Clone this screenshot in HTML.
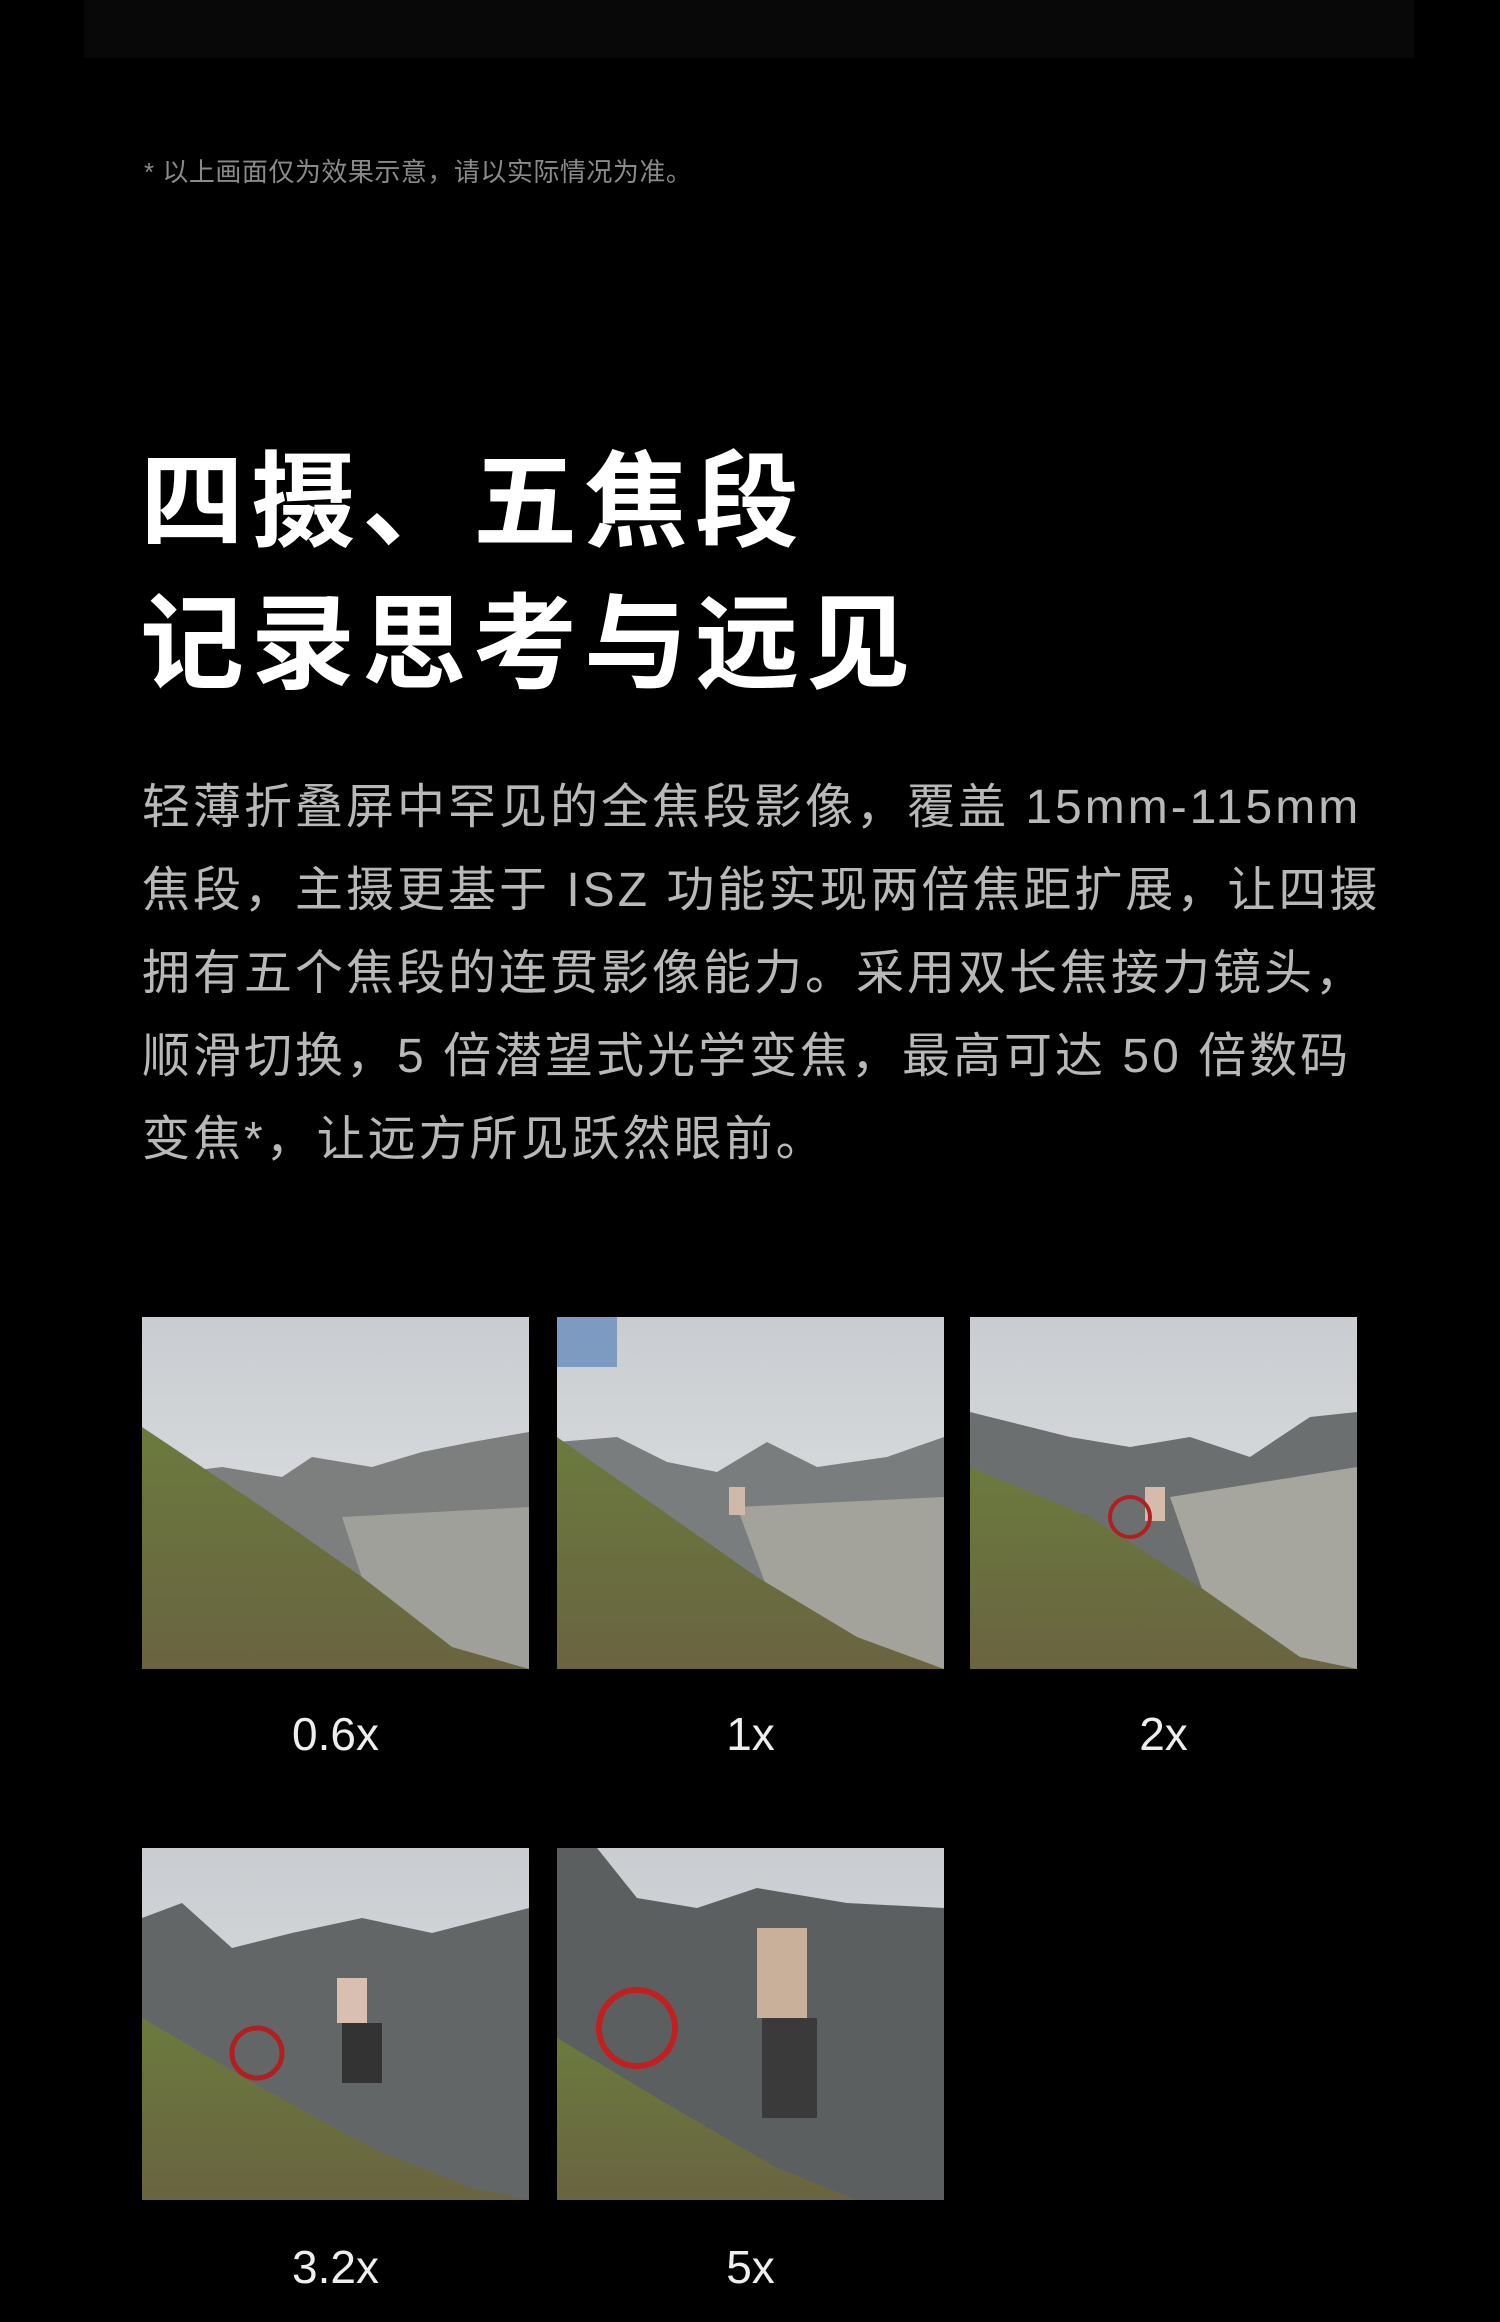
<!DOCTYPE html>
<html><head><meta charset="utf-8"><style>
html,body{margin:0;padding:0;background:#000;}
body{width:1500px;height:2322px;position:relative;overflow:hidden;font-family:"Liberation Sans","Noto Sans CJK SC",sans-serif;}
.topbar{position:absolute;left:84px;top:0;width:1330px;height:58px;background:#080808;}
.note{position:absolute;left:144px;top:152px;font-size:26px;color:#8a8a8a;white-space:nowrap;letter-spacing:0.5px;}
h1{position:absolute;left:140px;top:432px;margin:0;font-size:104px;line-height:142px;font-weight:bold;color:#fff;letter-spacing:7px;}
.p{position:absolute;left:142px;top:766px;width:1300px;font-size:48px;line-height:83px;color:#b8b8b8;letter-spacing:3px;white-space:nowrap;}
.img{position:absolute;width:387px;height:352px;overflow:hidden;}
.lbl{position:absolute;width:387px;text-align:center;font-size:46px;color:#eee;}
</style></head><body>
<div class="topbar"></div>
<div class="note">* 以上画面仅为效果示意，请以实际情况为准。</div>
<h1>四摄、五焦段<br>记录思考与远见</h1>
<div class="p">轻薄折叠屏中罕见的全焦段影像，覆盖 15mm-115mm<br>焦段，主摄更基于 ISZ 功能实现两倍焦距扩展，让四摄<br>拥有五个焦段的连贯影像能力。采用双长焦接力镜头，<br>顺滑切换，5 倍潜望式光学变焦，最高可达 50 倍数码<br>变焦*，让远方所见跃然眼前。</div>

<svg class="img" style="left:142px;top:1317px" viewBox="0 0 387 352"><defs><linearGradient id="s" x1="0" y1="0" x2="0" y2="1"><stop offset="0" stop-color="#c9ccd0"/><stop offset="1" stop-color="#e4e6e8"/></linearGradient><linearGradient id="g" x1="0" y1="0" x2="0" y2="1"><stop offset="0" stop-color="#6b7a3e"/><stop offset="1" stop-color="#6a6440"/></linearGradient></defs>
<rect width="387" height="352" fill="url(#s)"/><path d="M0 160 L80 150 L140 160 L170 140 L230 150 L280 135 L330 125 L387 115 L387 352 L0 352Z" fill="#7d7f7e"/><path d="M200 200 L387 190 L387 352 L250 352Z" fill="#a0a09a"/><path d="M0 110 L120 190 L220 260 L310 330 L387 352 L0 352Z" fill="url(#g)"/></svg>
<svg class="img" style="left:557px;top:1317px" viewBox="0 0 387 352"><rect width="387" height="352" fill="url(#s)"/><rect width="60" height="50" fill="#7d9ac0"/><path d="M0 125 L60 120 L110 145 L160 155 L210 125 L260 150 L330 140 L387 120 L387 352 L0 352Z" fill="#7a7d7d"/><path d="M180 190 L387 180 L387 352 L240 352Z" fill="#a3a39c"/><path d="M0 120 L100 190 L200 260 L300 320 L387 352 L0 352Z" fill="url(#g)"/><rect x="172" y="170" width="16" height="28" fill="#cfb9a8"/></svg>
<svg class="img" style="left:970px;top:1317px" viewBox="0 0 387 352"><rect width="387" height="352" fill="url(#s)"/><path d="M0 95 L40 105 L100 120 L160 130 L220 120 L280 140 L340 100 L387 95 L387 352 L0 352Z" fill="#6c6f70"/><path d="M200 180 L387 150 L387 352 L260 352Z" fill="#a6a59e"/><path d="M0 150 L120 200 L230 270 L330 340 L387 352 L0 352Z" fill="url(#g)"/><rect x="175" y="170" width="20" height="34" fill="#d5bba9"/><circle cx="160" cy="200" r="20" fill="none" stroke="#b02020" stroke-width="4"/></svg>
<svg class="img" style="left:142px;top:1848px" viewBox="0 0 387 352"><rect width="387" height="352" fill="url(#s)"/><path d="M0 70 L40 55 L90 100 L150 85 L220 70 L290 85 L387 60 L387 352 L0 352Z" fill="#636667"/><path d="M0 170 L120 240 L230 300 L330 340 L387 352 L0 352Z" fill="url(#g)"/><rect x="195" y="130" width="30" height="45" fill="#d8bfb0"/><rect x="200" y="175" width="40" height="60" fill="#333"/><circle cx="115" cy="205" r="25" fill="none" stroke="#b02020" stroke-width="5"/></svg>
<svg class="img" style="left:557px;top:1848px" viewBox="0 0 387 352"><rect width="387" height="352" fill="url(#s)"/><path d="M0 0 L40 0 L80 50 L140 60 L200 40 L290 55 L387 60 L387 352 L0 352Z" fill="#5c5f60"/><path d="M0 190 L100 250 L220 320 L300 352 L0 352Z" fill="url(#g)"/><rect x="200" y="80" width="50" height="90" fill="#c9b09a"/><rect x="205" y="170" width="55" height="100" fill="#3a3a3a"/><circle cx="80" cy="180" r="38" fill="none" stroke="#c02020" stroke-width="6"/></svg>

<div class="lbl" style="left:142px;top:1707px">0.6x</div>
<div class="lbl" style="left:557px;top:1707px">1x</div>
<div class="lbl" style="left:970px;top:1707px">2x</div>
<div class="lbl" style="left:142px;top:2240px">3.2x</div>
<div class="lbl" style="left:557px;top:2240px">5x</div>
</body></html>
